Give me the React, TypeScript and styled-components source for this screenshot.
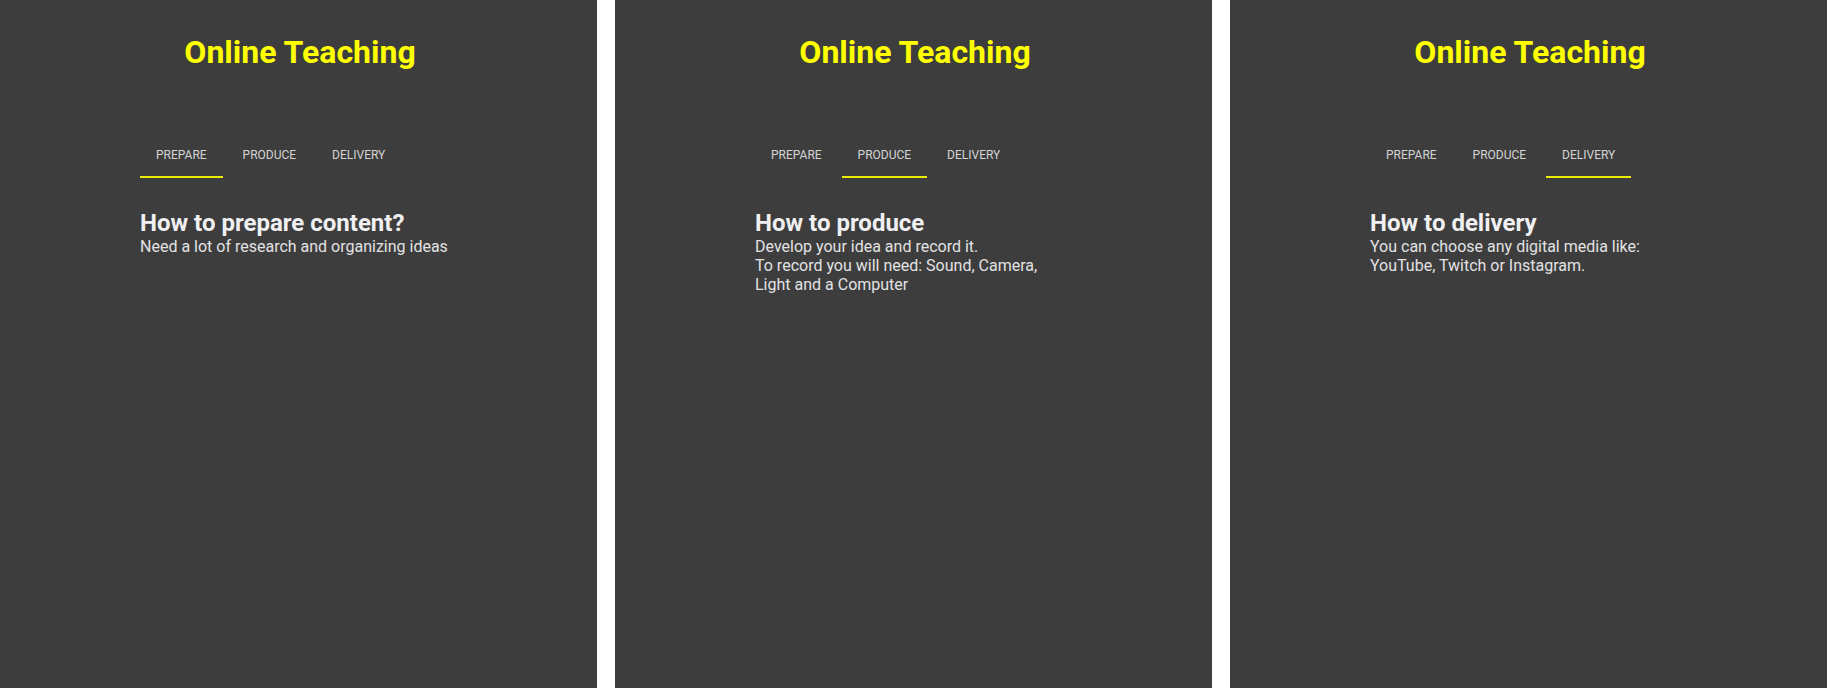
import { useState } from "react";
import styled, { createGlobalStyle } from "styled-components";

const GlobalStyle = createGlobalStyle`
  html, body {
    margin: 0;
    padding: 0;
    background: #ffffff;
  }
  body {
    font-family: Roboto, "Liberation Sans", Arial, sans-serif;
  }
`;

const steps = [
  {
    label: "Prepare",
    title: "How to prepare content?",
    lines: ["Need a lot of research and organizing ideas"],
  },
  {
    label: "Produce",
    title: "How to produce",
    lines: [
      "Develop your idea and record it.",
      "To record you will need: Sound, Camera, Light and a Computer",
    ],
  },
  {
    label: "Delivery",
    title: "How to delivery",
    lines: ["You can choose any digital media like: YouTube, Twitch or Instagram."],
  },
];

const TeachingCard = ({ initialTab }: { initialTab: number }) => {
  const [tab, setTab] = useState(initialTab);
  const step = steps[tab];

  return (
    <Panel>
      <Inner>
        <Title>Online Teaching</Title>
        <TabList role="tablist">
          {steps.map((s, i) => (
            <Tab
              key={s.label}
              role="tab"
              $active={i === tab}
              aria-selected={i === tab}
              onClick={() => setTab(i)}
            >
              {s.label}
            </Tab>
          ))}
        </TabList>
        <TabPanel role="tabpanel">
          <Heading>{step.title}</Heading>
          {step.lines.map((line) => (
            <Text key={line}>{line}</Text>
          ))}
        </TabPanel>
      </Inner>
    </Panel>
  );
};

export default function App() {
  return (
    <>
      <GlobalStyle />
      <Page>
        <TeachingCard initialTab={0} />
        <TeachingCard initialTab={1} />
        <TeachingCard initialTab={2} />
      </Page>
    </>
  );
}

const Page = styled.div`
  display: flex;
  gap: 18px;
  height: 688px;
  overflow: hidden;
  background: #ffffff;
`;

const Panel = styled.section`
  width: 597px;
  flex-shrink: 0;
  height: 100%;
  background: #3d3d3d;
`;

const Inner = styled.div`
  width: 320px;
  margin-left: 140px;
  padding-top: 33px;
`;

const Title = styled.h1`
  margin: 0;
  font-size: 32px;
  line-height: 38px;
  font-weight: 700;
  color: #ffff00;
  text-align: center;
`;

const TabList = styled.div`
  display: flex;
  gap: 4px;
  margin-top: 59px;
`;

const Tab = styled.button<{ $active: boolean }>`
  box-sizing: border-box;
  display: flex;
  align-items: center;
  justify-content: center;
  height: 48px;
  padding: 2px 16px 0;
  border: 0;
  background: none;
  font-family: inherit;
  font-size: 12px;
  font-weight: 400;
  text-transform: uppercase;
  color: #d4d4d4;
  cursor: pointer;
  box-shadow: ${({ $active }) => ($active ? "inset 0 -2px 0 #ecec00" : "none")};
`;

const TabPanel = styled.div`
  margin-top: 31px;
`;

const Heading = styled.h2`
  margin: 0;
  font-size: 24px;
  line-height: 29px;
  font-weight: 700;
  color: #f0f0f2;
`;

const Text = styled.p`
  margin: 0;
  font-size: 16px;
  line-height: 18.75px;
  color: #e2e2e4;
`;
